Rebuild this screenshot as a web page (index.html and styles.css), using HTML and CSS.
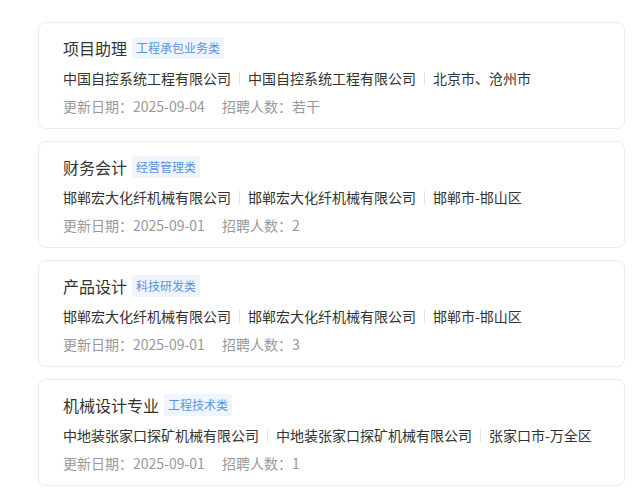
FILE: index.html
```html
<!DOCTYPE html>
<html lang="zh-CN">
<head>
  <meta charset="UTF-8">
  <title>招聘信息</title>
  <link rel="stylesheet" href="styles.css">
</head>
<body>

<div class="job-list">
  <div class="job">
    <div class="job-title">
      <span class="name">项目助理</span>
      <span class="tag">工程承包业务类</span>
    </div>
    <div class="job-company">
      <span>中国自控系统工程有限公司</span><i class="sep"></i><span>中国自控系统工程有限公司</span><i class="sep"></i><span>北京市、沧州市</span>
    </div>
    <div class="job-meta">
      <span>更新日期：2025-09-04</span>
      <span>招聘人数：若干</span>
    </div>
  </div>

  <div class="job">
    <div class="job-title">
      <span class="name">财务会计</span>
      <span class="tag">经营管理类</span>
    </div>
    <div class="job-company">
      <span>邯郸宏大化纤机械有限公司</span><i class="sep"></i><span>邯郸宏大化纤机械有限公司</span><i class="sep"></i><span>邯郸市-邯山区</span>
    </div>
    <div class="job-meta">
      <span>更新日期：2025-09-01</span>
      <span>招聘人数：2</span>
    </div>
  </div>

  <div class="job">
    <div class="job-title">
      <span class="name">产品设计</span>
      <span class="tag">科技研发类</span>
    </div>
    <div class="job-company">
      <span>邯郸宏大化纤机械有限公司</span><i class="sep"></i><span>邯郸宏大化纤机械有限公司</span><i class="sep"></i><span>邯郸市-邯山区</span>
    </div>
    <div class="job-meta">
      <span>更新日期：2025-09-01</span>
      <span>招聘人数：3</span>
    </div>
  </div>

  <div class="job">
    <div class="job-title">
      <span class="name">机械设计专业</span>
      <span class="tag">工程技术类</span>
    </div>
    <div class="job-company">
      <span>中地装张家口探矿机械有限公司</span><i class="sep"></i><span>中地装张家口探矿机械有限公司</span><i class="sep"></i><span>张家口市-万全区</span>
    </div>
    <div class="job-meta">
      <span>更新日期：2025-09-01</span>
      <span>招聘人数：1</span>
    </div>
  </div>
</div>

</body>
</html>
```

FILE: styles.css
```css
* {
  box-sizing: border-box;
}

body {
  margin: 0;
  background: #fff;
  font-family: "Noto Sans CJK SC", "Noto Sans", sans-serif;
  color: #333;
}

.job-list {
  padding: 22px 0 0 38px;
  width: 625px;
}

.job {
  background: #fff;
  border: 1px solid #ececec;
  border-radius: 8px;
  padding: 14px 24px 12px;
  margin-bottom: 12px;
}

.job-title {
  display: flex;
  align-items: center;
  height: 22px;
}

.job-title .name {
  font-size: 16px;
  color: #333;
  margin-right: 5px;
}

.tag {
  font-size: 12px;
  line-height: 22px;
  padding: 0 4px;
  background: #eef5fe;
  color: #5c93de;
  border-radius: 2px;
}

.job-company {
  display: flex;
  align-items: center;
  margin-top: 9px;
  font-size: 14px;
  line-height: 20px;
  color: #333;
}

.sep {
  display: inline-block;
  width: 1px;
  height: 13px;
  background: #e2e2e2;
  margin: 0 8px;
}

.job-meta {
  display: flex;
  gap: 17px;
  margin-top: 8px;
  font-size: 14px;
  line-height: 20px;
  color: #999;
}
```
